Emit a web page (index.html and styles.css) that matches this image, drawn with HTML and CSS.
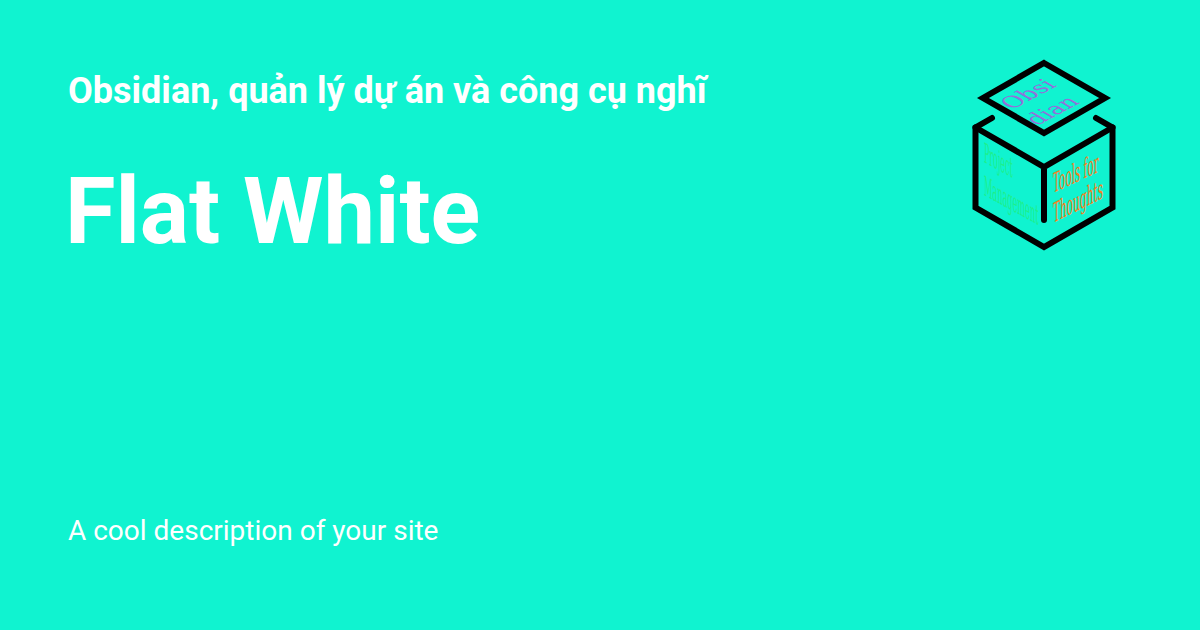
FILE: index.html
```html
<!DOCTYPE html>
<html lang="vi">
<head>
<meta charset="utf-8">
<title>Flat White</title>
<link rel="stylesheet" href="styles.css">
</head>
<body>
<main class="card">
  <div class="text">
    <div class="heading">
      <p class="subtitle">Obsidian, quản lý dự án và công cụ nghĩ</p>
      <h1 class="title">Flat White</h1>
    </div>
    <p class="description">A cool description of your site</p>
  </div>
  <svg class="logo" width="150" height="196" viewBox="969 57 150 196" aria-hidden="true">
    <g class="lines">
      <path d="M1044 63L1105 98L1044 133L983 98Z"/>
      <path d="M992 118L975.500 127.500V207.500L1044 247L1112.500 207.500V127.500L1096 118"/>
      <path d="M975.500 127.500L1044 167L1112.500 127.500M1044 167V220"/>
    </g>
    <text class="t-obsidian" transform="matrix(.866 -.46 .866 .5 1012 110)">Obsi</text>
    <text class="t-obsidian" transform="matrix(.866 -.46 .866 .5 1037 126)">dian</text>
    <text class="t-project" transform="matrix(.33 .18 0 1.140 984 162)">Project</text>
    <text class="t-project" transform="matrix(.34 .187 0 1.140 984 195)">Management</text>
    <text class="t-tools" transform="matrix(.433 -.2 0 1.140 1053 193)">Tools for</text>
    <text class="t-tools" transform="matrix(.44 -.22 0 1.140 1053 223)">Thoughts</text>
  </svg>
</main>
</body>
</html>
```
FILE: styles.css
```css
html, body {
  margin: 0;
  padding: 0;
}

.card {
  box-sizing: border-box;
  width: 1200px;
  height: 630px;
  padding: 52px 81px 83px 68px;
  display: flex;
  justify-content: space-between;
  background: #10f3d0;
  color: #fff;
  font-family: Roboto, sans-serif;
  overflow: hidden;
}

.text {
  display: flex;
  flex-direction: column;
  justify-content: space-between;
}

.subtitle {
  margin: 0 0 26px;
  font-size: 36px;
  line-height: 78px;
  font-weight: 700;
  white-space: nowrap;
}

.title {
  margin: 0 0 0 -3px;
  font-size: 92px;
  line-height: 112px;
  font-weight: 700;
}

.description {
  margin: 0;
  font-size: 28px;
  line-height: 32px;
  font-weight: 400;
}

.logo {
  flex: none;
  margin-top: 5px;
}

.lines path {
  fill: none;
  stroke: #000;
  stroke-width: 6;
  stroke-linecap: round;
  stroke-linejoin: miter;
}

.t-obsidian {
  font-family: "DejaVu Serif", serif;
  font-size: 23px;
  fill: #9370db;
}

.t-project {
  font-family: "DejaVu Serif", serif;
  font-size: 24px;
  fill: #1ef08c;
}

.t-tools {
  font-family: "DejaVu Serif", serif;
  font-size: 24px;
  fill: #f58220;
}
```
